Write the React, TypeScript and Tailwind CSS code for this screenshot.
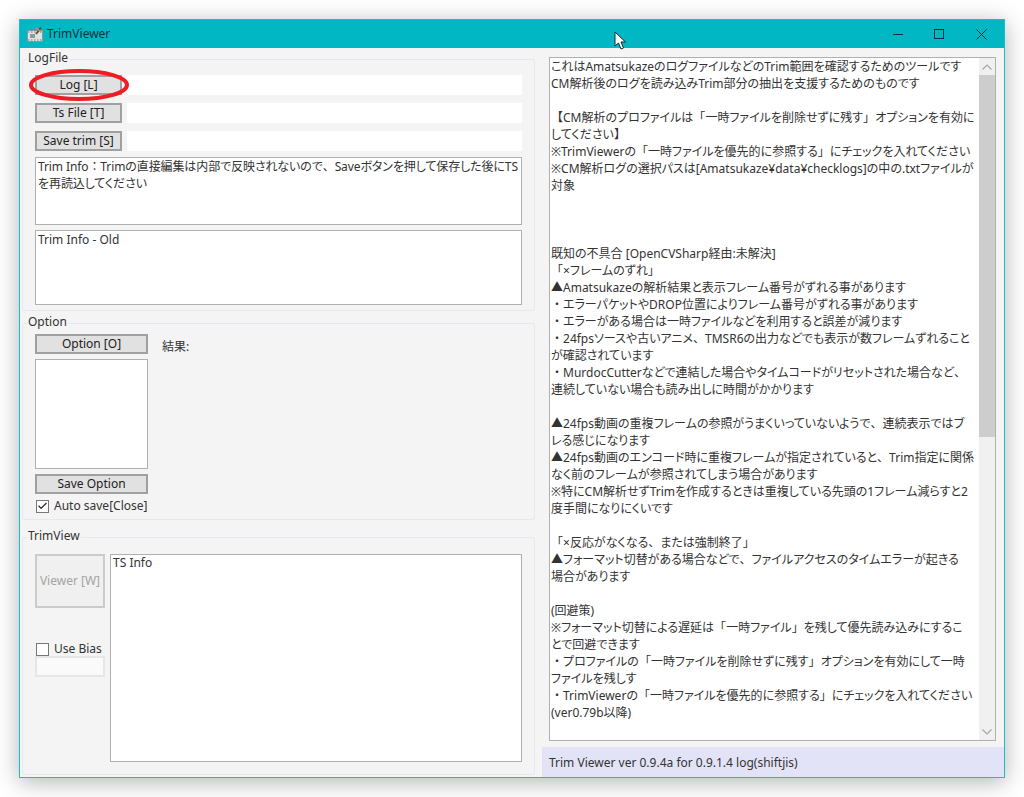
import { Check } from "lucide-react";

const helpLines = [
  "これはAmatsukazeのログファイルなどのTrim範囲を確認するためのツールです",
  "CM解析後のログを読み込みTrim部分の抽出を支援するためのものです",
  "",
  "【CM解析のプロファイルは「一時ファイルを削除せずに残す」オプションを有効に",
  "してください】",
  "※TrimViewerの「一時ファイルを優先的に参照する」にチェックを入れてください",
  "※CM解析ログの選択パスは[Amatsukaze¥data¥checklogs]の中の.txtファイルが",
  "対象",
  "",
  "",
  "",
  "既知の不具合 [OpenCVSharp経由:未解決]",
  "「×フレームのずれ」",
  "▲Amatsukazeの解析結果と表示フレーム番号がずれる事があります",
  "・エラーパケットやDROP位置によりフレーム番号がずれる事があります",
  "・エラーがある場合は一時ファイルなどを利用すると誤差が減ります",
  "・24fpsソースや古いアニメ、TMSR6の出力などでも表示が数フレームずれること",
  "が確認されています",
  "・MurdocCutterなどで連結した場合やタイムコードがリセットされた場合など、",
  "連続していない場合も読み出しに時間がかかります",
  "",
  "▲24fps動画の重複フレームの参照がうまくいっていないようで、連続表示ではブ",
  "レる感じになります",
  "▲24fps動画のエンコード時に重複フレームが指定されていると、Trim指定に関係",
  "なく前のフレームが参照されてしまう場合があります",
  "※特にCM解析せずTrimを作成するときは重複している先頭の1フレーム減らすと2",
  "度手間になりにくいです",
  "",
  "「×反応がなくなる、または強制終了」",
  "▲フォーマット切替がある場合などで、ファイルアクセスのタイムエラーが起きる",
  "場合があります",
  "",
  "(回避策)",
  "※フォーマット切替による遅延は「一時ファイル」を残して優先読み込みにするこ",
  "とで回避できます",
  "・プロファイルの「一時ファイルを削除せずに残す」オプションを有効にして一時",
  "ファイルを残しす",
  "・TrimViewerの「一時ファイルを優先的に参照する」にチェックを入れてください",
  "(ver0.79b以降)",
];

// punctuation keeps its full width, the rest of the text is proportional
function Jp({ text }: { text: string }) {
  return (
    <>
      {text.split(/([「」、・：【】])/).map((part, i) =>
        i % 2 === 1 ? (
          <span key={i} className="[font-feature-settings:normal]">{part}</span>
        ) : (
          part
        )
      )}
    </>
  );
}

function WinButton({ label, className }: { label: string; className: string }) {
  return (
    <button className={`flex items-center justify-center border-2 border-[#a0a0a0] bg-[#e1e1e1] text-[12px] text-[#222] ${className}`}>
      {label}
    </button>
  );
}

function GroupBox({ title, className, children }: { title: string; className: string; children: React.ReactNode }) {
  return (
    <div className={`relative mx-[2px] rounded-[3px] border border-[#e3e9ee] ${className}`}>
      <span className="absolute left-[4px] top-[-10px] bg-[#f4f4f4] px-[1px] text-[12px] leading-[16px] text-[#333]">{title}</span>
      {children}
    </div>
  );
}

function FileRow({ label, circled }: { label: string; circled?: boolean }) {
  return (
    <div className="flex h-[20px] gap-[5px]">
      <div className="relative">
        <WinButton label={label} className="h-[20px] w-[87px]" />
        {circled && (
          <svg className="absolute left-[-7px] top-[-7px]" width="102" height="34" viewBox="0 0 102 34" fill="none">
            <ellipse cx="51" cy="17" rx="48" ry="14" stroke="#ee1c25" strokeWidth="4" />
          </svg>
        )}
      </div>
      <div className="flex-1 bg-white" />
    </div>
  );
}

function CheckRow({ label, checked }: { label: string; checked?: boolean }) {
  return (
    <div className="ml-[1px] flex h-[14px] items-center gap-[5px] text-[12px] leading-[14px] text-[#333]">
      <span className="flex h-[13px] w-[13px] items-center justify-center border border-[#777] bg-white">
        {checked && <Check size={12} strokeWidth={2.5} className="text-[#222]" />}
      </span>
      {label}
    </div>
  );
}

export default function App() {
  return (
    <div className="h-[797px] w-[1024px] overflow-hidden bg-white pl-[19px] pt-[19px] [font-family:'Noto_Sans','Noto_Sans_CJK_JP',sans-serif] [font-feature-settings:'palt']">
      <div className="relative flex h-[759px] w-[986px] flex-col border border-[#19bcc8] bg-[#f4f4f4] shadow-[0_4px_22px_rgba(0,0,0,0.3)]">
        {/* title bar */}
        <div className="flex h-[28px] shrink-0 items-center bg-[#00b7c3] pl-[7px] text-[12px] text-[#10333a]">
          <svg width="16" height="16" viewBox="0 0 16 16">
            <rect x="0.5" y="4.5" width="15" height="11" fill="#dfe3e3" stroke="#8a9798" />
            <path d="M1 6 H15 M1 14 H15" stroke="#6f7c7e" strokeDasharray="1.5 1.5" />
            <rect x="3" y="8" width="5" height="4" fill="#8d9a9b" />
            <path d="M9 8 L14 1.5" stroke="#6b4b2a" strokeWidth="2" />
            <path d="M9 2 L14 6" stroke="#b89a70" strokeWidth="1.5" />
          </svg>
          <span className="ml-[4px]">TrimViewer</span>
          <div className="ml-auto flex items-center">
            <div className="flex w-[41px] justify-center">
              <div className="h-px w-[10px] bg-[#0e2f35]" />
            </div>
            <div className="flex w-[41px] justify-center">
              <div className="h-[10px] w-[10px] border border-[#0e2f35]" />
            </div>
            <div className="flex w-[45px] justify-center">
              <svg width="11" height="11" viewBox="0 0 11 11" stroke="#0e2f35" fill="none">
                <path d="M0.5 0.5 L10.5 10.5 M10.5 0.5 L0.5 10.5" />
              </svg>
            </div>
          </div>
        </div>

        <div className="flex min-h-0 flex-1">
          {/* left column */}
          <div className="flex w-[517px] shrink-0 flex-col pt-[11px]">
            <GroupBox title="LogFile" className="h-[252px] px-[12px] pt-[15px]">
              <div className="flex flex-col gap-[8px]">
                <FileRow label="Log [L]" circled />
                <FileRow label="Ts File [T]" />
                <FileRow label="Save trim [S]" />
              </div>
              <div className="mt-[6px] h-[68px] border border-[#b0b0b0] bg-white px-[2px] text-[12px] leading-[17px] tracking-[-0.1px] text-[#333]">
                <div className="h-[17px] whitespace-nowrap">
                  <Jp text="Trim Info：Trimの直接編集は内部で反映されないので、Saveボタンを押して保存した後にTS" />
                </div>
                <div className="h-[17px] whitespace-nowrap">を再読込してください</div>
              </div>
              <div className="mt-[5px] h-[75px] border border-[#b0b0b0] bg-white px-[2px] text-[12px] leading-[17px] text-[#333]">
                Trim Info - Old
              </div>
            </GroupBox>

            <GroupBox title="Option" className="mt-[12px] h-[197px] px-[12px] pt-[10px]">
              <div className="flex gap-[14px]">
                <div className="flex w-[113px] flex-col">
                  <WinButton label="Option [O]" className="h-[20px] w-full" />
                  <div className="mt-[5px] h-[110px] border border-[#b0b0b0] bg-white" />
                  <WinButton label="Save Option" className="mt-[5px] h-[20px] w-full" />
                  <div className="mt-[5px]">
                    <CheckRow label="Auto save[Close]" checked />
                  </div>
                </div>
                <span className="mt-[5px] text-[12px] leading-[16px] text-[#333]">結果:</span>
              </div>
            </GroupBox>

            <GroupBox title="TrimView" className="mt-[17px] h-[238px] px-[12px] pt-[16px]">
              <div className="flex gap-[5px]">
                <div className="flex w-[70px] flex-col">
                  <button className="h-[54px] w-full border-2 border-[#cbcbcb] bg-[#f0f0f0] text-[12px] text-[#a3a3a3]">Viewer [W]</button>
                  <div className="mt-[34px]">
                    <CheckRow label="Use Bias" />
                  </div>
                  <div className="h-[21px] border-2 border-[#e6e6e6] bg-[#fafafa]" />
                </div>
                <div className="h-[208px] flex-1 border border-[#b0b0b0] bg-white px-[2px] text-[12px] leading-[15px] text-[#333]">
                  TS Info
                </div>
              </div>
            </GroupBox>
          </div>

          {/* right column */}
          <div className="flex min-w-0 flex-1 flex-col pl-[5px]">
            <div className="flex flex-1 flex-col pl-[7px] pr-[8px] pt-[9px]">
              <div className="flex h-[684px] border border-[#b0b0b0] bg-white">
                <div className="min-w-0 flex-1 overflow-hidden pl-[1px] text-[12px] leading-[17px] text-[#333]">
                  {helpLines.map((line, i) => (
                    <div key={i} className="h-[17px] whitespace-pre">
                      <Jp text={line} />
                    </div>
                  ))}
                </div>
                <div className="flex w-[16px] shrink-0 flex-col bg-[#f0f0f0]">
                  <div className="flex h-[17px] items-center justify-center">
                    <svg width="10" height="6" viewBox="0 0 10 6" fill="none" stroke="#a6a6a6" strokeWidth="1.2">
                      <path d="M0.5 5.5 L5 1 L9.5 5.5" />
                    </svg>
                  </div>
                  <div className="h-[362px] bg-[#cdcdcd]" />
                  <div className="mt-auto flex h-[17px] items-center justify-center">
                    <svg width="10" height="6" viewBox="0 0 10 6" fill="none" stroke="#a6a6a6" strokeWidth="1.2">
                      <path d="M0.5 0.5 L5 5 L9.5 0.5" />
                    </svg>
                  </div>
                </div>
              </div>
            </div>
            <div className="flex h-[30px] shrink-0 items-center bg-[#e3e3f7] pl-[7px] pt-[1px] text-[12px] text-[#333]">
              Trim Viewer ver 0.9.4a for 0.9.1.4 log(shiftjis)
            </div>
          </div>
        </div>

        {/* mouse pointer from the capture */}
        <svg className="absolute left-[594px] top-[11px]" width="13" height="20" viewBox="0 0 13 20">
          <path d="M1 1 L1 15 L4.5 12 L7 18 L9.5 17 L7 11 L11.5 11 Z" fill="#fff" stroke="#0d2b33" strokeWidth="1" />
        </svg>
      </div>
    </div>
  );
}
